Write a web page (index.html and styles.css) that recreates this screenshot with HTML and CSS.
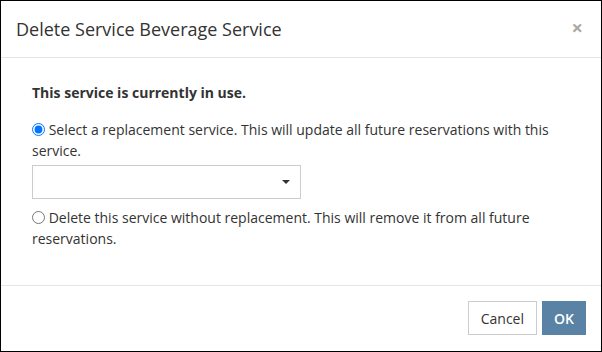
FILE: index.html
```html
<!DOCTYPE html>
<html lang="en">
<head>
    <meta charset="UTF-8">
    <meta name="viewport" content="width=device-width, initial-scale=1.0">
    <title>Delete Service</title>
    <link rel="stylesheet" href="styles.css">
</head>
<body>
    <div class="modal">
        <div class="modal-header">
            <h4 class="modal-title">Delete Service Beverage Service</h4>
            <span class="close">&times;</span>
        </div>

        <div class="modal-body">
            <p class="in-use">This service is currently in use.</p>

            <label class="option">
                <input type="radio" name="mode" checked>
                Select a replacement service. This will update all future reservations with this service.
            </label>
            <div class="select-box">
                <span class="caret"></span>
            </div>

            <label class="option option-second">
                <input type="radio" name="mode">
                Delete this service without replacement. This will remove it from all future reservations.
            </label>
        </div>

        <div class="modal-footer">
            <button class="btn btn-default">Cancel</button>
            <button class="btn btn-primary">OK</button>
        </div>
    </div>
</body>
</html>
```

FILE: styles.css
```css
* {
    box-sizing: border-box;
    margin: 0;
    padding: 0;
}

body {
    font-family: 'Open Sans', sans-serif;
    font-size: 14px;
    line-height: 1.5;
    color: #333;
    background: #fff;
}

.modal {
    width: 602px;
    height: 352px;
    border: 1px solid #000;
    display: flex;
    flex-direction: column;
}

.modal-header {
    display: flex;
    align-items: center;
    justify-content: space-between;
    padding: 15px 16px 15px 15px;
    height: 57px;
    border-bottom: 1px solid #e5e5e5;
}

.modal-title {
    font-size: 18px;
    font-weight: normal;
    line-height: 26px;
}

.close {
    font-size: 20px;
    font-weight: bold;
    color: #a9a9a9;
    line-height: 1;
    margin-right: 2px;
    margin-top: -2px;
}

.modal-body {
    flex: 1;
    padding: 24px 31px 0 31px;
}

.in-use {
    font-weight: bold;
    margin-bottom: 16px;
}

.option {
    display: block;
}

.option input {
    width: 13px;
    height: 13px;
    margin: 0;
    vertical-align: -1px;
}

.option-second {
    margin-top: 8px;
}

.select-box {
    width: 269px;
    height: 34px;
    margin-top: 4px;
    border: 1px solid #ccc;
    display: flex;
    align-items: center;
    justify-content: flex-end;
    padding-right: 10px;
}

.caret {
    width: 0;
    height: 0;
    border-left: 4px solid transparent;
    border-right: 4px solid transparent;
    border-top: 4px solid #333;
}

.modal-footer {
    display: flex;
    justify-content: flex-end;
    gap: 5px;
    padding: 15px 15px 16px 15px;
    border-top: 1px solid #e5e5e5;
}

.btn {
    height: 34px;
    padding: 0 12px;
    font-family: 'Open Sans', sans-serif;
    font-size: 14px;
    border: 1px solid transparent;
    cursor: pointer;
}

.btn-default {
    background: #fff;
    border-color: #ccc;
    color: #333;
}

.btn-primary {
    padding: 0 11px;
    background: #5a82a4;
    border-color: #5a82a4;
    color: #fff;
    font-weight: 600;
}
```
